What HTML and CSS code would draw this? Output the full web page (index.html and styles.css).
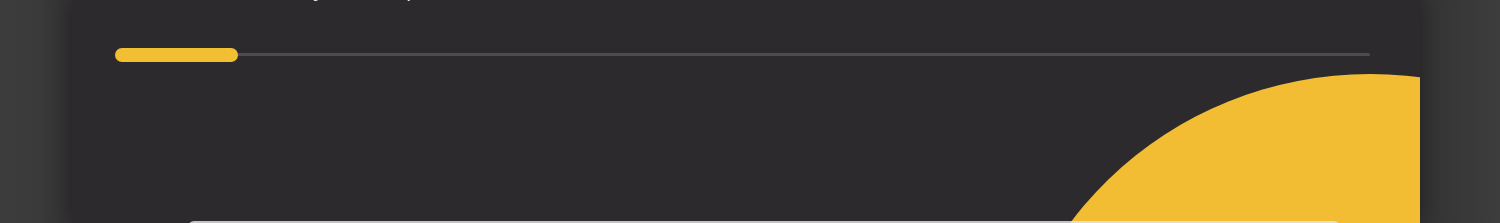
FILE: index.html
```html
<!DOCTYPE html>
<html>
<head>
  <meta charset="utf-8">
  <meta name="viewport" content="width=device-width, initial-scale=1">
  <title>Onboarding</title>
  <link rel="stylesheet" href="styles.css">
</head>
<body>
    <div class="stage">
        <div class="panel">
            <div class="blob"></div>
            <h2 class="title">Finish your setup</h2>
            <div class="progress">
                <div class="progress-fill" style="width: 9.8%"></div>
            </div>
            <div class="card"></div>
        </div>
    </div>
</body>
</html>
```

FILE: styles.css
```css
body {
    margin: 0;
    font-family: "Open Sans", "Liberation Sans", sans-serif;
    background-color: #3a3a3a;
    height: 223px;
    overflow: hidden;
}
.stage {
    display: flex;
    height: 223px;
    padding: 0 80px 0 72px;
    background: linear-gradient(90deg, #3c3c3c 0, #3a3a3a 40px, #323232 72px, #323232 1420px, #363636 1440px, #3d3d3d 1500px);
}
.panel {
    position: relative;
    flex: 1;
    background-color: #2c2a2d;
    padding: 0 50px 0 43px;
    overflow: hidden;
    box-shadow: 0 0 24px rgba(0, 0, 0, 0.35);
}
.blob {
    position: absolute;
    left: 928px;
    top: 74px;
    width: 740px;
    height: 720px;
    border-radius: 50%;
    background-color: #f2bd33;
}
.title {
    position: relative;
    margin: -24px 0 0 136px;
    font-size: 21px;
    line-height: 24px;
    font-weight: 400;
    color: #e8e8e8;
}
.progress {
    position: relative;
    margin-top: 53px;
    height: 3px;
    background-color: #4e4c4f;
    border-radius: 2px;
    display: flex;
    align-items: center;
}
.progress-fill {
    height: 14px;
    background-color: #f2bf33;
    border-radius: 7px;
}
.card {
    position: relative;
    margin: 165px 30px 0 73px;
    height: 40px;
    background-color: rgba(230, 230, 230, 0.82);
    border-radius: 6px 6px 0 0;
}
```
